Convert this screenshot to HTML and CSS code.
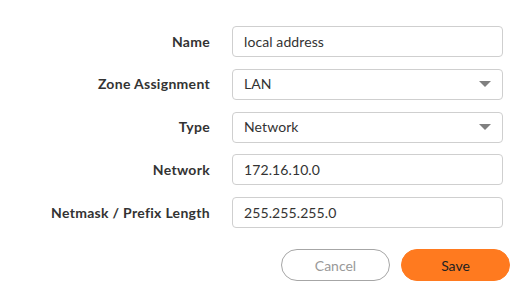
FILE: index.html
```html
<!DOCTYPE html>
<html>
<head>
<meta charset="utf-8">
<link rel="stylesheet" href="styles.css">
</head>
<body>
<div class="page">
  <form class="form">
    <label class="label">Name</label>
    <div class="field"><span class="value">local address</span></div>
    <label class="label">Zone Assignment</label>
    <div class="field select"><span class="value">LAN</span><span class="caret"></span></div>
    <label class="label">Type</label>
    <div class="field select"><span class="value">Network</span><span class="caret"></span></div>
    <label class="label">Network</label>
    <div class="field"><span class="value">172.16.10.0</span></div>
    <label class="label">Netmask / Prefix Length</label>
    <div class="field"><span class="value">255.255.255.0</span></div>
  </form>
  <div class="actions">
    <button class="btn btn-cancel" type="button">Cancel</button>
    <button class="btn btn-save" type="button">Save</button>
  </div>
</div>
</body>
</html>
```

FILE: styles.css
```css
html, body {
  margin: 0;
  padding: 0;
  background: #fff;
}
body {
  font-family: Lato, "Noto Sans", sans-serif;
  color: #333;
  width: 513px;
  height: 294px;
  overflow: hidden;
}
.page {
  padding: 26px 3px 0 0;
}
.form {
  display: grid;
  grid-template-columns: 210px 271px;
  grid-auto-rows: 31px;
  column-gap: 22px;
  row-gap: 11.75px;
  align-items: center;
}
.label {
  text-align: right;
  font-weight: 700;
  font-size: 14px;
  line-height: 16px;
  letter-spacing: 0.3px;
  color: #333;
}
.field {
  box-sizing: border-box;
  height: 31px;
  border: 1px solid #cfcfcf;
  border-radius: 4px;
  display: flex;
  align-items: center;
  justify-content: space-between;
  padding: 0 11px;
}
.value {
  font-size: 14px;
  line-height: 16px;
  letter-spacing: 0.1px;
  color: #333;
}
.caret {
  width: 0;
  height: 0;
  border-left: 6px solid transparent;
  border-right: 6px solid transparent;
  border-top: 6px solid #808080;
}
.actions {
  display: flex;
  justify-content: flex-end;
  gap: 11px;
  margin-top: 21px;
}
.btn {
  box-sizing: border-box;
  width: 109px;
  height: 32px;
  border-radius: 16px;
  font-family: Lato, "Noto Sans", sans-serif;
  font-size: 14px;
  cursor: pointer;
}
.btn-cancel {
  background: #fff;
  border: 1px solid #a6a6a6;
  color: #999;
}
.btn-save {
  background: #ff7a1f;
  border: 1px solid #ff7a1f;
  color: #222;
}
```
